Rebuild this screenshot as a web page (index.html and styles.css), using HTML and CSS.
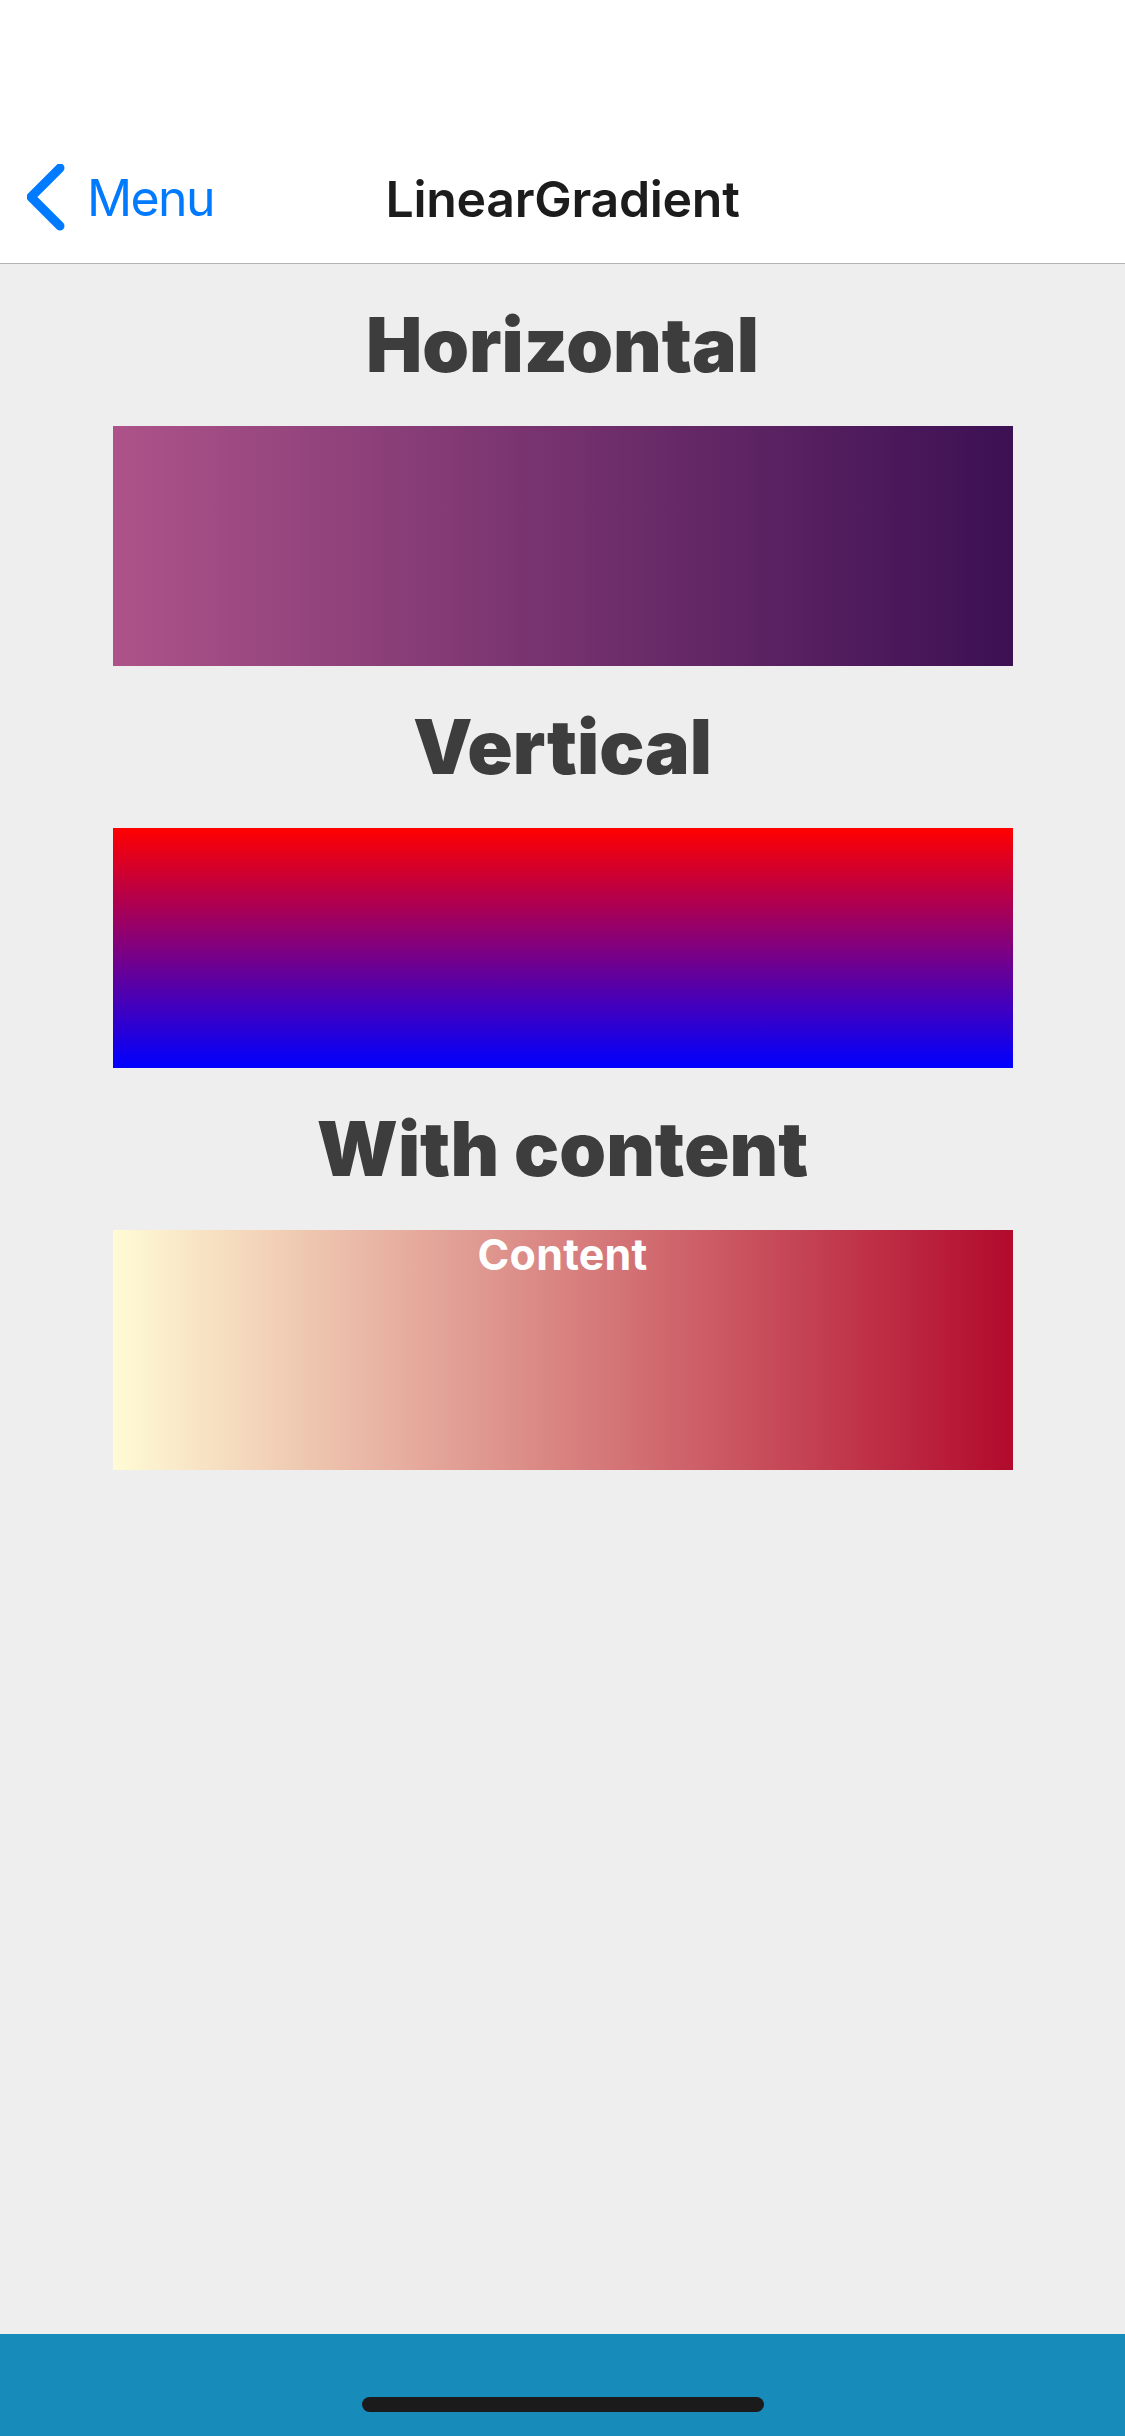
FILE: index.html
```html
<!DOCTYPE html>
<html lang="en">
<head>
<meta charset="utf-8">
<title>LinearGradient</title>
<link rel="stylesheet" href="styles.css">
</head>
<body>
<div class="screen">
  <header class="nav">
    <div class="status"></div>
    <div class="navbar">
      <div class="back">
        <svg class="chevron" width="44" height="70" viewBox="0 0 44 70">
          <polyline points="33,4 4,33 33,62" fill="none" stroke="#007aff" stroke-width="9" stroke-linecap="round" stroke-linejoin="round"/>
        </svg>
        <span class="back-label">Menu</span>
      </div>
      <div class="title">LinearGradient</div>
      <div class="spacer"></div>
    </div>
  </header>
  <main class="content">
    <h2 class="heading">Horizontal</h2>
    <div class="box grad-h"></div>
    <h2 class="heading">Vertical</h2>
    <div class="box grad-v"></div>
    <h2 class="heading">With content</h2>
    <div class="box grad-c"><span class="inner">Content</span></div>
  </main>
  <footer class="bottom">
    <div class="home"></div>
  </footer>
</div>
</body>
</html>
```

FILE: styles.css
```css
html, body {
  margin: 0;
  padding: 0;
}
body {
  width: 1125px;
  height: 2436px;
  overflow: hidden;
  font-family: "Inter", "Noto Sans", sans-serif;
}
.screen {
  display: flex;
  flex-direction: column;
  height: 2436px;
  background: #eeeeee;
}
.nav {
  background: #ffffff;
  border-bottom: 1px solid #b2b2b2;
  height: 263px;
  flex: none;
}
.status {
  height: 132px;
}
.navbar {
  height: 131px;
  display: grid;
  grid-template-columns: 1fr auto 1fr;
  align-items: center;
}
.back {
  justify-self: start;
  padding-left: 27px;
  display: flex;
  align-items: center;
  color: #007aff;
}
.chevron {
  display: block;
  margin-top: 2px;
}
.back-label {
  font-size: 50px;
  font-weight: 400;
  margin-left: 16px;
  letter-spacing: -1.6px;
  line-height: 70px;
}
.title {
  font-size: 50px;
  font-weight: 600;
  color: #1c1c1c;
  letter-spacing: -0.3px;
  line-height: 70px;
  margin-top: 2px;
}
.spacer {
  height: 1px;
}
.content {
  flex: 1;
  display: flex;
  flex-direction: column;
  align-items: center;
}
.heading {
  margin: 0;
  padding: 36px 0;
  font-size: 75px;
  line-height: 90px;
  font-weight: 900;
  color: #3d3d3d;
  letter-spacing: 0;
  text-align: center;
}
.box {
  width: 900px;
  height: 240px;
  flex: none;
}
.grad-h {
  background: linear-gradient(to right, #ad5389, #3c1053);
}
.grad-v {
  background: linear-gradient(to bottom, #ff0000, #0000ff);
}
.grad-c {
  background: linear-gradient(to right, #fffbd5, #b20a2c);
  display: flex;
  justify-content: center;
}
.inner {
  color: #ffffff;
  font-size: 43px;
  font-weight: 700;
  line-height: 48px;
  letter-spacing: 0.2px;
}
.bottom {
  flex: none;
  height: 102px;
  background: #178cbb;
  display: flex;
  justify-content: center;
}
.home {
  width: 402px;
  height: 15px;
  border-radius: 8px;
  background: #1b1b1b;
  margin-top: 63px;
}
```
